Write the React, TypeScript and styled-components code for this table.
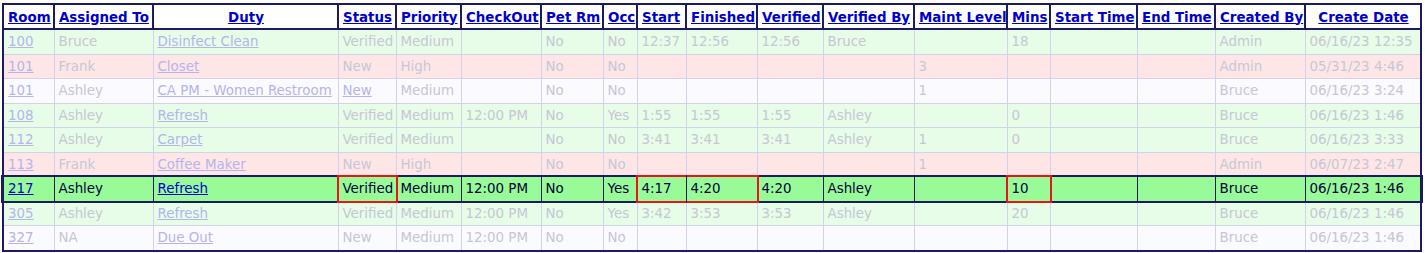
import React from 'react'
import styled, { createGlobalStyle, css } from 'styled-components'

const GlobalStyle = createGlobalStyle`
  html, body {
    margin: 0;
    padding: 0;
    background: #ffffff;
  }
`

type Tone = 'green' | 'pink' | 'white' | 'active'
type Mark = 'box' | 'left' | 'right'

const NAVY = '#1b1b5e'

const Page = styled.div`
  padding: 3px 2px 2px;
`

const Grid = styled.table`
  border-collapse: collapse;
  table-layout: fixed;
  width: 1420px;
  border: 2px solid ${NAVY};
  font-family: 'DejaVu Sans', Verdana, sans-serif;
  font-size: 13.4px;
`

const HeadCell = styled.th<{ center?: boolean }>`
  height: 22px;
  padding: 1px 3px 0 4px;
  border: 2px solid ${NAVY};
  background: #ffffff;
  text-align: ${p => (p.center ? 'center' : 'left')};
  white-space: nowrap;
  overflow: visible;
  font-weight: bold;
`

const HeadLink = styled.a`
  color: #0000cc;
  text-decoration: underline;
  cursor: pointer;
`

const rowBg: Record<Tone, string> = {
  green: '#e7fde7',
  pink: '#ffe6e6',
  white: '#fbfbff',
  active: '#98fb98',
}

const Row = styled.tr<{ tone: Tone }>`
  background: ${p => rowBg[p.tone]};
  ${p =>
    p.tone === 'active' &&
    css`
      outline: 2px solid ${NAVY};
    `}
`

const Cell = styled.td<{ active?: boolean; mark?: Mark }>`
  position: relative;
  height: 23.5px;
  padding: 0 4px;
  border: 1px solid ${p => (p.active ? NAVY : '#d2d2ec')};
  color: ${p => (p.active ? '#00003a' : '#c6c6d6')};
  white-space: nowrap;
  overflow: visible;

  ${p =>
    p.mark &&
    css`
      &::after {
        content: '';
        position: absolute;
        top: -2px;
        bottom: -2px;
        left: ${p.mark === 'right' ? '0' : '-2px'};
        right: ${p.mark === 'left' ? '0' : '-2px'};
        border: 2px solid #e8141c;
        ${p.mark === 'left' && 'border-right: none;'}
        ${p.mark === 'right' && 'border-left: none;'}
        pointer-events: none;
      }
    `}
`

const CellLink = styled.a<{ active?: boolean }>`
  color: ${p => (p.active ? '#0000cc' : '#b4b4ee')};
  text-decoration: underline;
  cursor: pointer;
`

const columns: { title: string; width: number; center?: boolean }[] = [
  { title: 'Room', width: 51 },
  { title: 'Assigned To', width: 99 },
  { title: 'Duty', width: 185, center: true },
  { title: 'Status', width: 58 },
  { title: 'Priority', width: 65 },
  { title: 'CheckOut', width: 80 },
  { title: 'Pet Rm', width: 62 },
  { title: 'Occ', width: 34 },
  { title: 'Start', width: 49 },
  { title: 'Finished', width: 71 },
  { title: 'Verified', width: 66 },
  { title: 'Verified By', width: 91 },
  { title: 'Maint Level', width: 93 },
  { title: 'Mins', width: 43 },
  { title: 'Start Time', width: 87 },
  { title: 'End Time', width: 78 },
  { title: 'Created By', width: 90 },
  { title: 'Create Date', width: 116, center: true },
]

interface Task {
  tone: Tone
  statusLink?: boolean
  cells: string[]
}

const tasks: Task[] = [
  { tone: 'green', cells: ['100', 'Bruce', 'Disinfect Clean', 'Verified', 'Medium', '', 'No', 'No', '12:37', '12:56', '12:56', 'Bruce', '', '18', '', '', 'Admin', '06/16/23 12:35'] },
  { tone: 'pink', cells: ['101', 'Frank', 'Closet', 'New', 'High', '', 'No', 'No', '', '', '', '', '3', '', '', '', 'Admin', '05/31/23 4:46'] },
  { tone: 'white', statusLink: true, cells: ['101', 'Ashley', 'CA PM - Women Restroom', 'New', 'Medium', '', 'No', 'No', '', '', '', '', '1', '', '', '', 'Bruce', '06/16/23 3:24'] },
  { tone: 'green', cells: ['108', 'Ashley', 'Refresh', 'Verified', 'Medium', '12:00 PM', 'No', 'Yes', '1:55', '1:55', '1:55', 'Ashley', '', '0', '', '', 'Bruce', '06/16/23 1:46'] },
  { tone: 'green', cells: ['112', 'Ashley', 'Carpet', 'Verified', 'Medium', '', 'No', 'No', '3:41', '3:41', '3:41', 'Ashley', '1', '0', '', '', 'Bruce', '06/16/23 3:33'] },
  { tone: 'pink', cells: ['113', 'Frank', 'Coffee Maker', 'New', 'High', '', 'No', 'No', '', '', '', '', '1', '', '', '', 'Admin', '06/07/23 2:47'] },
  { tone: 'active', cells: ['217', 'Ashley', 'Refresh', 'Verified', 'Medium', '12:00 PM', 'No', 'Yes', '4:17', '4:20', '4:20', 'Ashley', '', '10', '', '', 'Bruce', '06/16/23 1:46'] },
  { tone: 'green', cells: ['305', 'Ashley', 'Refresh', 'Verified', 'Medium', '12:00 PM', 'No', 'Yes', '3:42', '3:53', '3:53', 'Ashley', '', '20', '', '', 'Bruce', '06/16/23 1:46'] },
  { tone: 'white', cells: ['327', 'NA', 'Due Out', 'New', 'Medium', '12:00 PM', 'No', 'No', '', '', '', '', '', '', '', '', 'Bruce', '06/16/23 1:46'] },
]

// red review marks on the active row: Status, Start+Finished, Mins
const activeMarks: Record<number, Mark> = { 3: 'box', 8: 'left', 9: 'right', 13: 'box' }

export default function App() {
  return (
    <>
      <GlobalStyle />
      <Page>
        <Grid>
          <colgroup>
            {columns.map(c => (
              <col key={c.title} style={{ width: c.width }} />
            ))}
          </colgroup>
          <thead>
            <tr>
              {columns.map(c => (
                <HeadCell key={c.title} center={c.center}>
                  <HeadLink>{c.title}</HeadLink>
                </HeadCell>
              ))}
            </tr>
          </thead>
          <tbody>
            {tasks.map((t, ri) => {
              const active = t.tone === 'active'
              return (
                <Row key={ri} tone={t.tone}>
                  {t.cells.map((v, ci) => {
                    const isLink = ci === 0 || ci === 2 || (ci === 3 && t.statusLink)
                    return (
                      <Cell key={ci} active={active} mark={active ? activeMarks[ci] : undefined}>
                        {isLink ? <CellLink active={active}>{v}</CellLink> : v}
                      </Cell>
                    )
                  })}
                </Row>
              )
            })}
          </tbody>
        </Grid>
      </Page>
    </>
  )
}
